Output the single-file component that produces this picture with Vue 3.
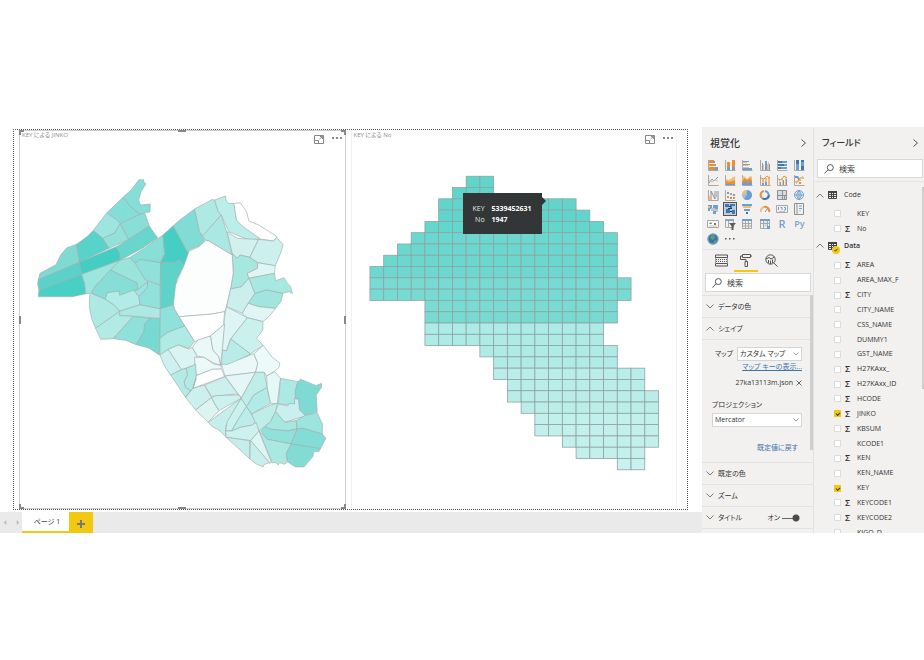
<script setup>
import { ref } from 'vue'

const O = '#ea8f35'
const T = '#f0bd7f'
const B = '#6a9fd4'
const D = '#3f78ad'
const G = '#8f8f8f'
const L = '#b9c4cc'
const axis = ['s', '#a8a8a8', 'M1.5 1V11.5H11.5']

const visuals = [
  { name: '積み上げ横棒グラフ', shapes: [axis, ['f', O, 'M2 1h5v3H2zM2 5h7v2H2zM2 8h6v3H2z'], ['f', B, 'M6 2h2v2H6zM8 8h3v3H8z']] },
  { name: '積み上げ縦棒グラフ', shapes: [axis, ['f', O, 'M3 3h3v5H3zM8 1h3v7H8z'], ['f', B, 'M3 8h3v3H3zM8 8h3v3H8z']] },
  { name: '集合横棒グラフ', shapes: [axis, ['f', B, 'M2 2h6v1H2zM2 5h7v1H2zM2 9h9v2H2z'], ['f', T, 'M2 3h4v1H2zM2 6h5v1H2zM2 8h6v1H2z']] },
  { name: '集合縦棒グラフ', shapes: [axis, ['f', B, 'M3 4h1v7H3zM6 2h2v9H6zM10 5h1v6h-1z'], ['f', T, 'M4 6h1v5H4zM8 5h1v6H8zM9 3h1v8H9z']] },
  { name: '100% 積み上げ横棒グラフ', shapes: [axis, ['f', B, 'M2 2h9v2H2zM2 5h9v2H2zM2 8h9v2H2z'], ['f', D, 'M2 2h4v2H2zM2 5h6v2H2zM2 8h3v2H2z']] },
  { name: '100% 積み上げ縦棒グラフ', shapes: [axis, ['f', B, 'M3 1h3v10H3zM8 1h3v10H8z'], ['f', D, 'M3 1h3v4H3zM8 1h3v2H8zM8 7h3v4H8z']] },
  { name: '折れ線グラフ', shapes: [axis, ['s', B, 'M2 9L5 5L7 7L11 3'], ['s', T, 'M2 6L5 8L8 6L11 7']] },
  { name: '面グラフ', shapes: [axis, ['f', T, 'M2 5L5 6L11 2V11H2z'], ['f', O, 'M2 7L6 8L11 6V11H2z'], ['f', B, 'M2 10h9v1H2z']] },
  { name: '積み上げ面グラフ', shapes: [axis, ['f', T, 'M1 4L3 2L6 5L9 2L11 3V7H1z'], ['f', O, 'M1 7L4 4L6 6L9 4L11 7V10H1z'], ['f', B, 'M1 10L4 7L7 9L9 7L11 9V11H1z']] },
  { name: '折れ線および積み上げ縦棒グラフ', shapes: [axis, ['f', T, 'M3 5h2v6H3zM6 4h2v7H6zM9 3h2v8H9z'], ['f', B, 'M3 9h2v2H3zM6 8h2v3H6z'], ['s', O, 'M2 4L5 5L8 2L11 4']] },
  { name: '折れ線および集合縦棒グラフ', shapes: [axis, ['f', T, 'M3 5h1v6H3zM6 4h1v7H6zM9 3h1v8H9z'], ['f', B, 'M4 8h1v3H4zM7 6h1v5H7zM10 5h1v6h-1z'], ['s', O, 'M2 5L5 6L8 2L11 4']] },
  { name: 'リボン グラフ', shapes: [axis, ['f', B, 'M2 2h3l3 5h-2l-2-3H2z'], ['s', O, 'M2 8H4L7 4H11'], ['s', T, 'M3 10L6 7L10 2'], ['f', O, 'M6 8h2v2H6z']] },
  { name: 'ウォーターフォール図', shapes: [axis, ['s', G, 'M4 2V11M8 2V10M4 2L8 10M11 2V11'], ['f', T, 'M2 7h2v4H2z'], ['f', L, 'M9 2h2v6H9z']] },
  { name: '散布図', shapes: [axis, ['f', B, 'M3 3h2v2H3zM9 5h2v2H9zM6 8h2v2H6z'], ['f', O, 'M6 4h2v2H6zM3 7h2v2H3zM9 8h2v2H9z']] },
  { name: '円グラフ', shapes: [['f', '#a9bdd2', 'M6 1A5 5 0 1 0 11 6H6z'], ['f', B, 'M6 6V1A5 5 0 1 1 3 10z'], ['f', T, 'M5 5V1A5 5 0 0 0 1 5z']] },
  { name: 'ドーナツ グラフ', shapes: [['r', B, 'M6 2A4 4 0 1 1 3 9'], ['r', D, 'M10 6A4 4 0 0 1 4 9.5'], ['r', O, 'M3 9A4 4 0 0 1 5 2']] },
  { name: 'ツリーマップ', shapes: [['f', '#d3dce4', 'M1 1h10v10H1z'], ['s', G, 'M1.5 1.5H10.5V10.5H1.5zM6.5 1.5V10.5M1.5 6.5H10.5M8.5 6.5V10.5']] },
  { name: 'マップ', shapes: [['s', B, 'M6 1.5A4.5 4.5 0 1 0 6 10.5A4.5 4.5 0 1 0 6 1.5zM1.5 6H10.5M6 1.5V10.5M6 1.5Q1.5 6 6 10.5Q10.5 6 6 1.5']] },
  { name: '塗り分け地図', shapes: [['f', B, 'M1 2h4v4H3v2H1zM6 2h5v4H6zM6 8h3v3H6z'], ['f', L, 'M4 5h4v3H4zM9 6h2v3H9z'], ['f', T, 'M1 3h2v2H1zM7 6h2v2H7z']] },
  { name: '図形マップ', active: true, shapes: [['f', '#a9cbe8', 'M1 1h10v10H1z'], ['f', D, 'M1 1h4v3H1zM6 1h5v2H8v2H6zM2 6h4v4H2zM8 7h3v4H8z'], ['f', '#2c3e4e', 'M5 3h2v1H5zM4 5h4v1H4zM6 8h2v1H6z']] },
  { name: 'じょうごグラフ', shapes: [['f', B, 'M1 1h10v2H1zM3 6h6v2H3z'], ['f', T, 'M2 3h8v2H2z'], ['f', D, 'M5 9h2v2H5z']] },
  { name: 'ゲージ', shapes: [['r', T, 'M2 9A4 4 0 0 1 5 4'], ['r', O, 'M5 4A4 4 0 0 1 10 9'], ['s', G, 'M6 9L9 5']] },
  { name: 'カード', shapes: [['s', '#a8a8a8', 'M.5 2.5H11.5V9.5H.5z'], ['s', B, 'M2.5 4V7M4.5 4.5H6V7M8 4.5H9.5V7H8'], ['s', L, 'M3 8.5H9']] },
  { name: '複数の行カード', shapes: [['s', G, 'M1.5 .5H10.5V11.5H1.5zM4 .5V11.5'], ['s', B, 'M6 3H9M6 5.5H9'], ['s', L, 'M6 8H8']] },
  { name: 'KPI', shapes: [['f', '#fafafa', 'M.5 2.5H11.5V9.5H.5z'], ['s', '#a8a8a8', 'M.5 2.5H11.5V9.5H.5z'], ['f', '#3f9a66', 'M2 6L4 4L5 6z'], ['f', '#c85a48', 'M7 5h2v2H7z'], ['s', L, 'M2 8H10']] },
  { name: 'スライサー', shapes: [['f', B, 'M1 1h9v2H1z'], ['s', '#a8a8a8', 'M1.5 1.5H9.5V9.5H1.5zM4.5 3V9'], ['f', '#5b5b5b', 'M5 5H12L9.5 8V12H7.5V8z']] },
  { name: 'テーブル', shapes: [['s', '#a8a8a8', 'M1.5 1.5H10.5V10.5H1.5zM4.5 3V10M7.5 3V10M1 5.5H11M1 8H11'], ['f', B, 'M1 1h10v2H1z']] },
  { name: 'マトリックス', shapes: [['f', '#d5dde4', 'M4 4h5v5H4z'], ['s', '#a8a8a8', 'M1.5 1.5H10.5V10.5H1.5zM4.5 3V10M8.5 3V10M1 5.5H11'], ['f', B, 'M1 1h10v2H1zM8 8h3v3H8z']] },
  { name: 'R スクリプト ビジュアル', text: 'R' },
  { name: 'Python ビジュアル', text: 'Py' },
  { name: 'ArcGIS Maps', shapes: [['f', '#3976a8', 'M6 .5A5.5 5.5 0 1 0 6 11.500A5.5 5.5 0 1 0 6 .5'], ['f', '#55a37b', 'M3 3L7 2L8 5L6 7L4 6zM7 8L9 7L10 9L7 10z'], ['s', '#8aa6b8', 'M6 1A5 5 0 1 0 6 11A5 5 0 1 0 6 1']] }
]

// Districts, grouped by survey sheet; each sheet has its own origin.
const sheets = [
  {
    x: 30, y: 360, areas: [
      ['#85dfd7', '343,231 367,209 390,179 405,179 404,186 411,191 396,216 389,240 395,255 424,252 423,276 410,277 393,283 360,255'],
      ['#82ded6', '343,231 360,255 393,283 334,311 320,297 293,279'],
      ['#9fe5df', '293,279 320,297 334,311 317,339 281,355 253,331'],
      ['#88dfd8', '334,311 393,283 408,280 421,318 359,358'],
      ['#92e2da', '281,355 317,339 334,311 359,358 300,385'],
      ['#59d2c9', '253,331 281,355 300,385 211,427 202,373 234,350'],
      ['#7edad2', '202,373 211,427 88,479 93,460 141,434 155,405 174,383'],
      ['#5ad2c9', '88,479 211,427 218,463 90,510 86,492'],
      ['#4acfc5', '90,510 218,463 227,490 230,521 190,530 88,530'],
      ['#43cdc3', '211,427 322,380 333,400 333,421 218,463'],
      ['#68d6cd', '322,380 359,358 421,318 446,354 400,385 333,421 333,400'],
      ['#9de5df', '218,463 333,421 305,450 263,494 245,520 230,521 227,490'],
      ['#86ded6', '305,450 384,488 388,510 332,526 330,513 295,518 289,538 247,520 263,494'],
      ['#9ae4dc', '305,450 333,421 363,412 390,440 409,476 416,485 388,510 384,488'],
      ['#88dfd8', '363,412 409,383 462,345 467,390 455,428 393,418 379,430'],
      ['#90e1da', '379,430 393,418 455,428 454,495 420,482 409,480'],
      ['#46cec4', '462,345 493,317 540,404 525,437 512,420 495,428 455,428 467,400'],
      ['#5ed3ca', '455,428 495,428 512,420 525,437 504,478 497,540 494,555 457,566 454,566'],
      ['#80dcd4', '493,317 510,302 557,267 572,335 588,362 570,378 540,390 540,404']
    ]
  },
  {
    x: 540, y: 360, areas: [
      ['#aee9e4', '47,267 100,238 107,240 118,275 127,285 71,348 62,335'],
      ['#bceee9', '107,240 140,228 141,240 149,250 165,250 173,300 245,357 210,360 150,335 127,285 118,275'],
      ['#ace8e3', '127,285 145,340 160,405 88,362 80,360 71,348'],
      ['#ffffff', '165,250 184,248 203,275 210,303 240,315 295,350 284,363 245,357 190,318 173,300 168,270'],
      ['#d2f1ee', '145,335 175,355 239,358 213,412 183,405 175,415 160,400'],
      ['#ccf0ed', '239,358 284,363 293,352 313,374 305,400 289,437 236,428 213,412'],
      ['#a6e7e0', '160,400 175,415 183,405 213,412 236,428 236,445 205,460 210,475 188,500 155,507 163,460'],
      ['#dff6f3', '236,428 289,437 287,460 210,475 205,460 236,445'],
      ['#a7e8e1', '210,475 287,460 290,482 316,473 325,490 335,500 341,520 330,515 312,520 262,510 228,521']
    ]
  },
  {
    x: 240, y: 810, areas: [
      ['#b2ece7', '79,88 85,68 120,63 122,76 165,60 180,80 183,104 122,124 105,105'],
      ['#9ee5df', '176,60 206,35 205,53 180,80 165,60'],
      ['#aee9e4', '37,70 79,88 105,105 122,124 50,175 38,145 31,110 32,75'],
      ['#ade9e4', '122,124 183,104 244,116 244,145 163,139 122,137'],
      ['#b2ebe6', '50,175 122,124 122,137 163,139 103,206 65,208'],
      ['#90e1da', '163,139 215,145 197,165 195,185 172,224 140,211 103,206'],
      ['#76d9d2', '215,145 245,146 241,255 210,234 172,224 195,185 197,160'],
      ['#92e2dc', '183,104 180,80 205,52 207,34 243,45 244,116'],
      ['#fcfefe', '380,-88 388,-88 460,-45 463,10 455,57 443,110 437,125 400,132 305,140 300,140 287,118 283,105 290,45 300,20 315,-13 330,-56 360,-70'],
      ['#ffffff', '300,140 400,132 437,125 434,165 395,198 347,215'],
      ['#caefec', '455,57 488,50 510,25 528,71 508,100 490,130 443,110'],
      ['#a0e5de', '528,71 562,60 612,70 606,95 590,115 540,110 508,100'],
      ['#e0f6f4', '508,100 540,110 590,115 570,140 552,155 505,143 490,130'],
      ['#caf1ee', '505,143 552,155 552,180 533,205 553,226 515,252 455,207'],
      ['#ddf5f3', '443,110 505,143 455,207 443,243 430,240 437,140'],
      ['#b9ece8', '455,207 515,252 455,283 428,285 430,240 443,243'],
      ['#8fe1db', '244,116 283,105 287,118 300,140 317,168 285,180 265,188 243,205'],
      ['#b0eae5', '243,205 265,188 285,180 317,168 347,215 330,235 298,225 268,238 243,255'],
      ['#ccf1ee', '243,255 268,238 308,299 275,315 255,285'],
      ['#daf4f2', '268,238 298,225 330,237 340,232 355,258 347,285 308,299'],
      ['#eaf9f8', '340,232 357,210 395,198 402,240 420,260 425,285 405,280 375,262 355,258'],
      ['#e8f8f6', '395,198 410,185 437,162 430,240 425,285 420,260 402,240'],
      ['#ebf9f8', '347,262 375,262 405,282 428,287 425,298 400,298 352,317 348,285'],
      ['#ffffff', '352,317 400,298 428,297 437,320 342,355'],
      ['#b4ebe6', '275,315 308,299 322,295 326,315 316,335 320,352 335,362 320,382'],
      ['#b2ebe5', '322,295 350,283 352,317 342,355 335,362 320,352 316,335 326,315']
    ]
  },
  {
    x: 540, y: 990, areas: [
      ['#c5efeb', '20,202 42,175 52,145 42,175'],
      ['#cbf0ed', '42,175 77,165 98,203 50,240 20,202'],
      ['#eaf9f8', '128,103 145,103 215,75 225,72 237,100 230,127 138,138'],
      ['#edfafa', '225,72 253,46 280,82 303,99 300,112 287,125 263,138 256,127 230,127 237,100'],
      ['#e4f6f5', '138,138 230,127 187,205'],
      ['#cbf0ed', '77,165 138,140 187,205 172,192 98,200'],
      ['#dcf5f1', '50,240 98,203 108,222 120,242 88,277'],
      ['#cdf1ee', '98,203 110,197 180,195 187,205 120,242 108,222'],
      ['#c5efeb', '88,277 187,205 160,250 140,290 142,322 120,300 100,290'],
      ['#c9f1ee', '187,205 203,230 180,265 158,303 140,303 145,275 160,250'],
      ['#bdedea', '203,230 232,275 218,286 185,292 158,303 180,265'],
      ['#bfeee9', '230,127 256,127 265,172 225,195 203,230 187,205'],
      ['#b1ebe7', '265,172 275,220 218,252 203,230 225,195'],
      ['#e6f8f6', '263,138 287,125 305,145 295,222 275,220 265,172'],
      ['#ade9e4', '305,145 357,155 350,185 356,208 347,225 298,222'],
      ['#7edbd4', '365,148 412,167 428,160 428,172 412,195 415,245 380,256 362,240 359,208 349,206 349,183 357,155'],
      ['#c9f0ee', '298,222 327,228 330,220 347,222 347,206 359,208 362,240 380,258 317,277 290,245'],
      ['#bfeee9', '218,252 275,225 296,220 290,245 275,275 240,303'],
      ['#a6e7e1', '290,245 317,277 352,272 355,297 328,303 275,298 258,290 275,275'],
      ['#9ce4de', '352,272 380,256 415,248 427,275 431,280 430,312 372,295 355,297'],
      ['#90e1db', '258,290 275,298 328,303 355,297 337,342 265,328 245,303'],
      ['#83ddd6', '355,297 372,295 430,312 441,325 425,356 337,342'],
      ['#82dcd5', '337,342 425,356 420,365 405,365 402,380 375,411 350,411 325,395 322,370'],
      ['#aae8e2', '240,303 265,328 337,342 322,370 325,395 318,403 302,398 298,405 292,398 280,398'],
      ['#ddf5f3', '240,303 278,398 272,400 215,332'],
      ['#cdf1ee', '140,303 158,303 185,292 218,286 232,278 240,303 215,332 142,322'],
      ['#c3eeea', '142,322 212,332 213,387'],
      ['#c9efec', '215,332 272,398 255,404 253,411 232,402 213,387']
    ]
  }
]

// Mesh rows: first column, end column, fill.
const mesh = [
  [7, 9, '#5fd5cc'], [6, 9, '#5fd5cc'], [5, 15, '#61d5cc'], [5, 16, '#61d5cc'], [4, 17, '#63d6cd'],
  [3, 18, '#6ad8d0'], [2, 18, '#6bd8d0'], [1, 18, '#6bd8d0'], [0, 18, '#6dd8d1'],
  [0, 19, '#77dad3'], [0, 19, '#77dad3'], [4, 18, '#78dbd4'], [4, 18, '#78dad3'],
  [4, 17, '#acebe6'], [4, 17, '#acebe6'], [8, 18, '#afebe6'], [9, 18, '#b1ebe7'],
  [9, 20, '#b8ede9'], [10, 20, '#b9ede9'], [10, 21, '#baede9'], [11, 21, '#bbeee9'],
  [12, 21, '#c2f0ec'], [12, 21, '#c3f0ec'], [14, 21, '#c3f0ec'], [15, 20, '#c4f0ec'], [18, 20, '#c9f1ef']
]
const cellW = 289 / 21
const cellH = 294 / 26
const cells = mesh.flatMap(([from, to, fill], row) =>
  Array.from({ length: to - from }, (_, i) => ({ x: 370 + (from + i) * cellW, y: 176 + row * cellH, fill }))
)

const codeFields = ref([
  { name: 'KEY' },
  { name: 'No', sum: true }
])
const dataFields = ref([
  { name: 'AREA', sum: true },
  { name: 'AREA_MAX_F' },
  { name: 'CITY', sum: true },
  { name: 'CITY_NAME' },
  { name: 'CSS_NAME' },
  { name: 'DUMMY1' },
  { name: 'GST_NAME' },
  { name: 'H27KAxx_', sum: true },
  { name: 'H27KAxx_ID', sum: true },
  { name: 'HCODE', sum: true },
  { name: 'JINKO', sum: true, checked: true },
  { name: 'KBSUM', sum: true },
  { name: 'KCODE1' },
  { name: 'KEN', sum: true },
  { name: 'KEN_NAME' },
  { name: 'KEY', checked: true },
  { name: 'KEYCODE1', sum: true },
  { name: 'KEYCODE2', sum: true },
  { name: 'KIGO_D' }
])
const tables = [
  { name: 'Code', fields: codeFields },
  { name: 'Data', used: true, fields: dataFields }
]
const titleOn = ref(true)
const handles = ['tl', 'tc', 'tr', 'ml', 'mr', 'bl', 'bc', 'br']
</script>

<template>
  <div class="app">
    <div class="workspace">
      <main class="report">
        <div class="canvas">
          <div class="frame">
            <section class="visual selected">
              <header class="visual-head">
                <h2>KEY による JINKO</h2>
                <button class="bare" aria-label="フォーカス モード">
                  <svg class="focus" viewBox="0 0 10 9"><path d="M.5 .5H9.5V8.5H.5zM.5 5.5H4.5V8.5M5.5 4L8 2M6 1.5H8.5V4" /></svg>
                </button>
                <button class="bare" aria-label="その他のオプション">
                  <svg class="dots" viewBox="0 0 10 2"><path d="M0 0h2v2H0zM4 0h2v2H4zM8 0h2v2H8z" /></svg>
                </button>
              </header>
              <svg class="plot" viewBox="63 441 974 1083">
                <g v-for="s in sheets" :key="s.x + '-' + s.y" :transform="`translate(${s.x} ${s.y})`">
                  <polygon v-for="(a, i) in s.areas" :key="i" class="area" :fill="a[0]" :points="a[1]" />
                </g>
              </svg>
              <i v-for="h in handles" :key="h" class="handle" :class="h"></i>
            </section>
            <section class="visual">
              <header class="visual-head">
                <h2>KEY による No</h2>
                <button class="bare" aria-label="フォーカス モード">
                  <svg class="focus" viewBox="0 0 10 9"><path d="M.5 .5H9.5V8.5H.5zM.5 5.5H4.5V8.5M5.5 4L8 2M6 1.5H8.5V4" /></svg>
                </button>
                <button class="bare" aria-label="その他のオプション">
                  <svg class="dots" viewBox="0 0 10 2"><path d="M0 0h2v2H0zM4 0h2v2H4zM8 0h2v2H8z" /></svg>
                </button>
              </header>
              <svg class="plot" viewBox="352 147 325 361">
                <rect v-for="(c, i) in cells" :key="i" class="cell" :x="c.x" :y="c.y" :width="cellW" :height="cellH" :fill="c.fill" />
              </svg>
              <dl class="tooltip">
                <dt>KEY</dt><dd>5339452631</dd>
                <dt>No</dt><dd>1947</dd>
              </dl>
            </section>
          </div>
        </div>
        <nav class="tabs">
          <button class="step" aria-label="前のページ"><svg viewBox="0 0 4 6"><path d="M3.5 0V6L.5 3z" /></svg></button>
          <button class="step" aria-label="次のページ"><svg viewBox="0 0 4 6"><path d="M.5 0V6L3.5 3z" /></svg></button>
          <button class="tab">ページ 1</button>
          <button class="add" aria-label="ページの追加"><svg viewBox="0 0 8 8"><path d="M3 0h2v3h3v2H5v3H3V5H0V3h3z" /></svg></button>
        </nav>
      </main>

      <aside class="pane viz">
        <header class="pane-head">
          <h1>視覚化</h1>
          <button class="bare" aria-label="折りたたむ"><svg class="chev side" viewBox="0 0 5 8"><path d="M.5 .5L4.5 4L.5 7.5" /></svg></button>
        </header>
        <div class="gallery">
          <button v-for="v in visuals" :key="v.name" class="pick" :class="{ active: v.active }" :aria-label="v.name">
            <span v-if="v.text" class="letter" :class="{ small: v.text.length > 1 }">{{ v.text }}</span>
            <svg v-else viewBox="0 0 12 12">
              <path
                v-for="(s, i) in v.shapes" :key="i" :d="s[2]"
                :fill="s[0] === 'f' ? s[1] : 'none'" :stroke="s[0] === 'f' ? 'none' : s[1]"
                :stroke-width="s[0] === 'r' ? 2 : 1"
              />
            </svg>
          </button>
          <button class="pick" aria-label="その他"><svg class="dots dark" viewBox="0 0 10 2"><path d="M0 0h1.5v1.5H0zM4 0h1.5v1.5H4zM8 0h1.5v1.5H8z" /></svg></button>
        </div>
        <div class="modes">
          <button class="mode" aria-label="フィールド">
            <svg viewBox="0 0 13 12"><path d="M.5 .5H12.5V3H.5zM.5 9H12.5V11.5H.5z" /><path stroke-dasharray="1 1" d="M.5 3V9M12.5 3V9M1 5H12M1 7H12" /></svg>
          </button>
          <button class="mode on" aria-label="書式">
            <svg viewBox="0 0 13 13"><path d="M2.5 .5H10.5V3.5H2.5zM2.5 2H.5V5.5H6V7.5M10.5 2H12M5 7.5H7.5V12.5H5z" /></svg>
          </button>
          <button class="mode" aria-label="分析">
            <svg viewBox="0 0 13 13"><path d="M5.5 .8A4.7 4.7 0 1 0 5.5 10.2A4.7 4.7 0 1 0 5.5 .8M8.8 9L12.5 12.5M1 5L4 3.5L6 5L9.5 3M3.5 6V9M5.5 6.5V10M7.5 5.5V9" /></svg>
          </button>
        </div>
        <label class="search">
          <svg viewBox="0 0 10 10"><path d="M6.3 .6A3 3 0 1 0 6.3 6.6A3 3 0 1 0 6.3 .6M4 5.8L.5 9.5" /></svg>
          <input type="text" placeholder="検索" aria-label="書式の検索">
        </label>
        <div class="props">
          <button class="group"><svg class="chev" viewBox="0 0 8 5"><path d="M.5 .5L4 4L7.5 .5" /></svg>データの色</button>
          <button class="group"><svg class="chev" viewBox="0 0 8 5"><path d="M.5 4.5L4 1L7.5 4.5" /></svg>シェイプ</button>
          <div class="shape">
            <div class="line">
              <label for="map-kind">マップ</label>
              <span class="drop"><select id="map-kind"><option>カスタム マップ</option></select>
                <svg viewBox="0 0 6 4"><path d="M.5 .5L3 3L5.5 .5" /></svg></span>
            </div>
            <a class="keys" href="#">マップ キーの表示...</a>
            <div class="file">27ka13113m.json
              <button class="bare" aria-label="削除"><svg viewBox="0 0 6 6"><path d="M.5 .5L5.5 5.5M5.5 .5L.5 5.5" /></svg></button>
            </div>
            <label class="proj" for="projection">プロジェクション</label>
            <span class="drop"><select id="projection"><option>Mercator</option></select>
              <svg viewBox="0 0 6 4"><path d="M.5 .5L3 3L5.5 .5" /></svg></span>
            <a class="reset" href="#">既定値に戻す</a>
          </div>
          <button class="group"><svg class="chev" viewBox="0 0 8 5"><path d="M.5 .5L4 4L7.5 .5" /></svg>既定の色</button>
          <button class="group"><svg class="chev" viewBox="0 0 8 5"><path d="M.5 .5L4 4L7.5 .5" /></svg>ズーム</button>
          <div class="group last">
            <svg class="chev" viewBox="0 0 8 5"><path d="M.5 .5L4 4L7.5 .5" /></svg>タイトル
            <label class="toggle">オン<input v-model="titleOn" type="checkbox"></label>
          </div>
          <i class="thumb"></i>
        </div>
      </aside>

      <aside class="pane fields">
        <header class="pane-head">
          <h1 class="kana">フィールド</h1>
          <button class="bare" aria-label="折りたたむ"><svg class="chev side" viewBox="0 0 5 8"><path d="M.5 .5L4.5 4L.5 7.5" /></svg></button>
        </header>
        <label class="search">
          <svg viewBox="0 0 10 10"><path d="M6.3 .6A3 3 0 1 0 6.3 6.6A3 3 0 1 0 6.3 .6M4 5.8L.5 9.5" /></svg>
          <input type="text" placeholder="検索" aria-label="フィールドの検索">
        </label>
        <div class="tree">
          <template v-for="t in tables" :key="t.name">
            <button class="table" :class="{ used: t.used }">
              <svg class="chev" viewBox="0 0 8 5"><path d="M.5 4.5L4 1L7.5 4.5" /></svg>
              <span class="table-icon">
                <svg viewBox="0 0 9 8"><path d="M.5 .5H8.5V7.5H.5zM3.5 1V7.5M5.5 1V7.5M.5 3.5H8.5M.5 5.5H8.5" /><path class="band" d="M0 0h9v2H0z" /></svg>
                <svg v-if="t.used" class="badge" viewBox="0 0 8 8"><circle cx="4" cy="4" r="4" /><path d="M2.5 4L3.5 5.2L5.5 2.8" /></svg>
              </span>
              {{ t.name }}
            </button>
            <ul :class="{ long: t.used }">
              <li v-for="f in t.fields.value" :key="f.name">
                <label class="field">
                  <input v-model="f.checked" type="checkbox">
                  <span class="sigma">{{ f.sum ? 'Σ' : '' }}</span>
                  <span>{{ f.name }}</span>
                </label>
              </li>
            </ul>
          </template>
        </div>
        <i class="thumb"></i>
      </aside>
    </div>
  </div>
</template>

<style>
body {
  margin: 0;
  background: #fff;
}
</style>

<style scoped>
.app {
  box-sizing: border-box;
  height: 100vh;
  padding: 127px 0;
  font-family: "Open Sans", "Noto Sans CJK JP", sans-serif;
  font-feature-settings: "palt";
  font-size: 7px;
  line-height: 10px;
  color: #333;
}
.app * {
  box-sizing: border-box;
}
.workspace {
  display: flex;
  height: 100%;
  overflow: hidden;
}
h1, h2, ul, dl, dd {
  margin: 0;
  padding: 0;
  font-weight: 400;
}
button, input, select {
  padding: 0;
  border: 0;
  background: none;
  font: inherit;
  font-feature-settings: inherit;
  color: inherit;
}
svg {
  display: block;
}
.bare {
  display: flex;
}

/* report */
.report {
  flex: 1;
  min-width: 0;
  display: flex;
  flex-direction: column;
}
.canvas {
  flex: 1;
  min-height: 0;
  padding: 2px 14px 2px 13px;
}
.frame {
  height: 100%;
  display: flex;
  gap: 5px;
  padding: 0 10px 0 5px;
  border: 1px dotted #555;
}
.visual {
  position: relative;
  flex: 1;
  min-width: 0;
  display: flex;
  flex-direction: column;
  border: 1px solid #f0f0f0;
  border-top-color: transparent;
  border-bottom-color: transparent;
}
.visual.selected {
  border: 1px solid #cfcfcf;
}
.visual-head {
  display: flex;
  align-items: center;
  gap: 8px;
  height: 16px;
  padding: 0 3px 0 2px;
}
.visual-head h2 {
  flex: 1;
  align-self: flex-start;
  font-size: 6px;
  line-height: 8px;
  color: #8c8c8c;
}
.focus {
  width: 10px;
  height: 9px;
  fill: none;
  stroke: #888;
}
.dots {
  width: 10px;
  height: 2px;
  fill: #888;
}
.visual-head .dots {
  margin-bottom: 2px;
}
.dots.dark {
  fill: #555;
}
.plot {
  flex: 1;
  min-height: 0;
  width: 100%;
}
.area {
  stroke: #a2aeae;
  stroke-width: 2;
  stroke-linejoin: round;
}
.cell {
  stroke: #8fa3a1;
  stroke-width: 0.8;
}
.handle {
  position: absolute;
  width: 5px;
  height: 5px;
  border: 0 solid #888;
}
.tl { left: -1px; top: -1px; border-width: 2px 0 0 2px; }
.tr { right: -1px; top: -1px; border-width: 2px 2px 0 0; }
.bl { left: -1px; bottom: -1px; border-width: 0 0 2px 2px; }
.br { right: -1px; bottom: -1px; border-width: 0 2px 2px 0; }
.tc, .bc { left: calc(50% - 4px); width: 8px; height: 2px; background: #888; }
.ml, .mr { top: calc(50% - 4px); width: 2px; height: 8px; background: #888; }
.tc { top: -1px; }
.bc { bottom: -1px; }
.ml { left: -1px; }
.mr { right: -1px; }
.tooltip {
  position: absolute;
  left: 111px;
  top: 62px;
  display: grid;
  grid-template-columns: auto auto;
  column-gap: 7px;
  padding: 10px 10px 9px;
  background: #323636;
  color: #e8e8e8;
  line-height: 11px;
}
.tooltip::after {
  content: "";
  position: absolute;
  left: 100%;
  top: 4px;
  border: 4px solid transparent;
  border-left-color: #323636;
  border-right-width: 0;
}
.tooltip dt {
  text-align: right;
}
.tooltip dd {
  font-weight: 700;
  color: #fff;
}
.tabs {
  display: flex;
  height: 21px;
  padding-left: 3px;
  background: #eaeaea;
}
.step {
  width: 4px;
  margin-right: 9px;
}
.step svg {
  width: 4px;
  height: 5px;
  fill: #bbb;
}
.step + .tab {
  margin-left: -7px;
}
.tab {
  width: 47px;
  padding-left: 3px;
  background: #fff;
  border-bottom: 2px solid #f2c811;
  color: #444;
}
.add {
  display: grid;
  place-items: center;
  width: 24px;
  background: #f2c811;
}
.add svg {
  width: 8px;
  height: 8px;
  margin-top: 3px;
  fill: #777;
}

/* panes */
.pane {
  position: relative;
  background: #f2f1f0;
}
.viz {
  width: 112px;
  border-right: 1px solid #e2e2e2;
}
.fields {
  width: 110px;
}
.pane-head {
  display: flex;
  align-items: center;
  justify-content: space-between;
  height: 31px;
  padding: 0 7px 0 8px;
}
.pane-head h1 {
  font-size: 10px;
  font-weight: 500;
  line-height: 14px;
}
.pane-head h1.kana {
  font-size: 9px;
}
.fields .pane-head {
  padding-right: 6px;
}
.chev {
  width: 8px;
  height: 5px;
  fill: none;
  stroke: #777;
}
.chev.side {
  width: 5px;
  height: 8px;
  stroke: #555;
}
.gallery {
  display: grid;
  grid-template: repeat(6, 1fr) / repeat(6, 1fr);
  height: 88px;
  margin: 0 5px 0 2px;
}
.pick {
  display: grid;
  place-items: center;
  min-height: 0;
}
.pick svg:not(.dots) {
  width: 12px;
  height: 12px;
}
.pick.active svg {
  outline: 1px solid #555;
  background: #cfcfcf;
}
.letter {
  font-size: 11px;
  line-height: 12px;
  font-weight: 600;
  color: #7aa3cf;
}
.letter.small {
  font-size: 9px;
}
.modes {
  display: flex;
  gap: 1px;
  height: 24px;
  margin-top: 3px;
  padding-left: 7px;
  border-top: 1px solid #e4e4e4;
}
.mode {
  display: grid;
  place-items: center;
  width: 24px;
  height: 22px;
  border-bottom: 2px solid transparent;
}
.mode.on {
  border-color: #f2c811;
}
.mode svg {
  width: 13px;
  height: 13px;
  fill: none;
  stroke: #555;
}
.search {
  display: flex;
  align-items: center;
  gap: 5px;
  height: 19px;
  margin: 0 2px 0 3px;
  padding: 0 7px;
  border: 1px solid #d8d8d8;
  background: #fff;
  font-size: 8px;
}
.viz .search {
  padding: 0 6px;
}
.fields .search {
  margin: 1px 1px 0 3px;
  padding: 0 6px;
}
.search svg {
  flex: none;
  width: 10px;
  height: 10px;
  fill: none;
  stroke: #555;
}
.search input {
  width: 100%;
  outline: 0;
}
.search input::placeholder {
  color: #444;
}
.props {
  position: relative;
  margin-top: 3px;
}
.group {
  display: flex;
  align-items: center;
  gap: 4px;
  width: 100%;
  height: 22px;
  padding: 0 13px 0 4px;
  border-top: 1px solid #e2e2e2;
  text-align: left;
}
.group.last {
  height: 23px;
  border-bottom: 1px solid #e2e2e2;
}
.toggle {
  display: flex;
  align-items: center;
  gap: 2px;
  margin-left: auto;
}
.toggle input {
  appearance: none;
  width: 18px;
  height: 8px;
  margin: 0;
  background:
    radial-gradient(circle at 14px 4px, #4a4a4a 3px, transparent 4px),
    linear-gradient(#666, #666) 0 4px / 12px 1px no-repeat;
}
.shape {
  display: flex;
  flex-direction: column;
  align-items: flex-end;
  height: 123px;
  padding: 7px 11px 0 10px;
  border-top: 1px solid #e2e2e2;
}
.line {
  display: flex;
  align-items: center;
  gap: 4px;
}
.drop {
  position: relative;
  width: 65px;
  height: 14px;
}
.drop svg {
  position: absolute;
  right: 3px;
  top: 5px;
  width: 6px;
  height: 4px;
  fill: none;
  stroke: #999;
  pointer-events: none;
}
.drop select {
  appearance: none;
  display: block;
  width: 100%;
  height: 100%;
  padding: 0 2px;
  border: 1px solid #d4d4d4;
  background: #fff;
}
.keys {
  color: #3a74a8;
  line-height: 11px;
}
.file {
  display: flex;
  align-items: center;
  gap: 3px;
  margin-top: 6px;
}
.file svg {
  width: 6px;
  height: 6px;
  fill: none;
  stroke: #666;
}
.proj {
  align-self: flex-start;
  margin: 12px 0 3px;
}
.proj + .drop {
  width: 100%;
}
.reset {
  margin: 16px 4px 0 0;
  color: #3a74a8;
  text-decoration: none;
}
.thumb {
  position: absolute;
  right: 0;
  top: 0;
  width: 3px;
  height: 155px;
  background: #cfcfcf;
}
.fields .thumb {
  top: 60px;
  width: 2px;
  height: 202px;
}

/* field tree */
.tree {
  margin-top: 3px;
  border-top: 1px solid #e4e4e4;
}
.table {
  display: flex;
  align-items: center;
  width: 100%;
  height: 22px;
  padding-left: 2px;
  margin-top: 2px;
}
.table.used {
  height: 19px;
  margin-top: 0;
  font-weight: 600;
}
.table-icon {
  position: relative;
  margin: 0 7px 0 4px;
}
.table-icon svg {
  width: 9px;
  height: 8px;
  fill: none;
  stroke: #444;
}
.table-icon .band {
  fill: #444;
  stroke: none;
}
.table-icon .badge {
  position: absolute;
  left: 4px;
  top: 4px;
  width: 8px;
  height: 8px;
  stroke: #333;
}
.badge circle {
  fill: #f2c811;
  stroke: none;
}
ul {
  display: grid;
  list-style: none;
  grid-auto-rows: 15px;
}
ul.long {
  height: 282px;
  grid-auto-rows: 1fr;
  margin-top: 3px;
}
.field {
  display: flex;
  align-items: center;
  height: 100%;
  padding-left: 20px;
}
.field input {
  appearance: none;
  display: grid;
  width: 7px;
  height: 7px;
  margin: 0;
  border: 1px solid #dcdcdc;
  background: #fff;
}
.field input:checked {
  border-color: #f2c811;
  background: #f2c811;
}
.field input:checked::after {
  content: "";
  width: 3px;
  height: 2px;
  margin: 1px;
  border: solid #333;
  border-width: 0 0 1px 1px;
  transform: rotate(-45deg);
}
.sigma {
  width: 16px;
  padding-left: 4px;
  font-size: 9px;
  font-weight: 600;
}
</style>
